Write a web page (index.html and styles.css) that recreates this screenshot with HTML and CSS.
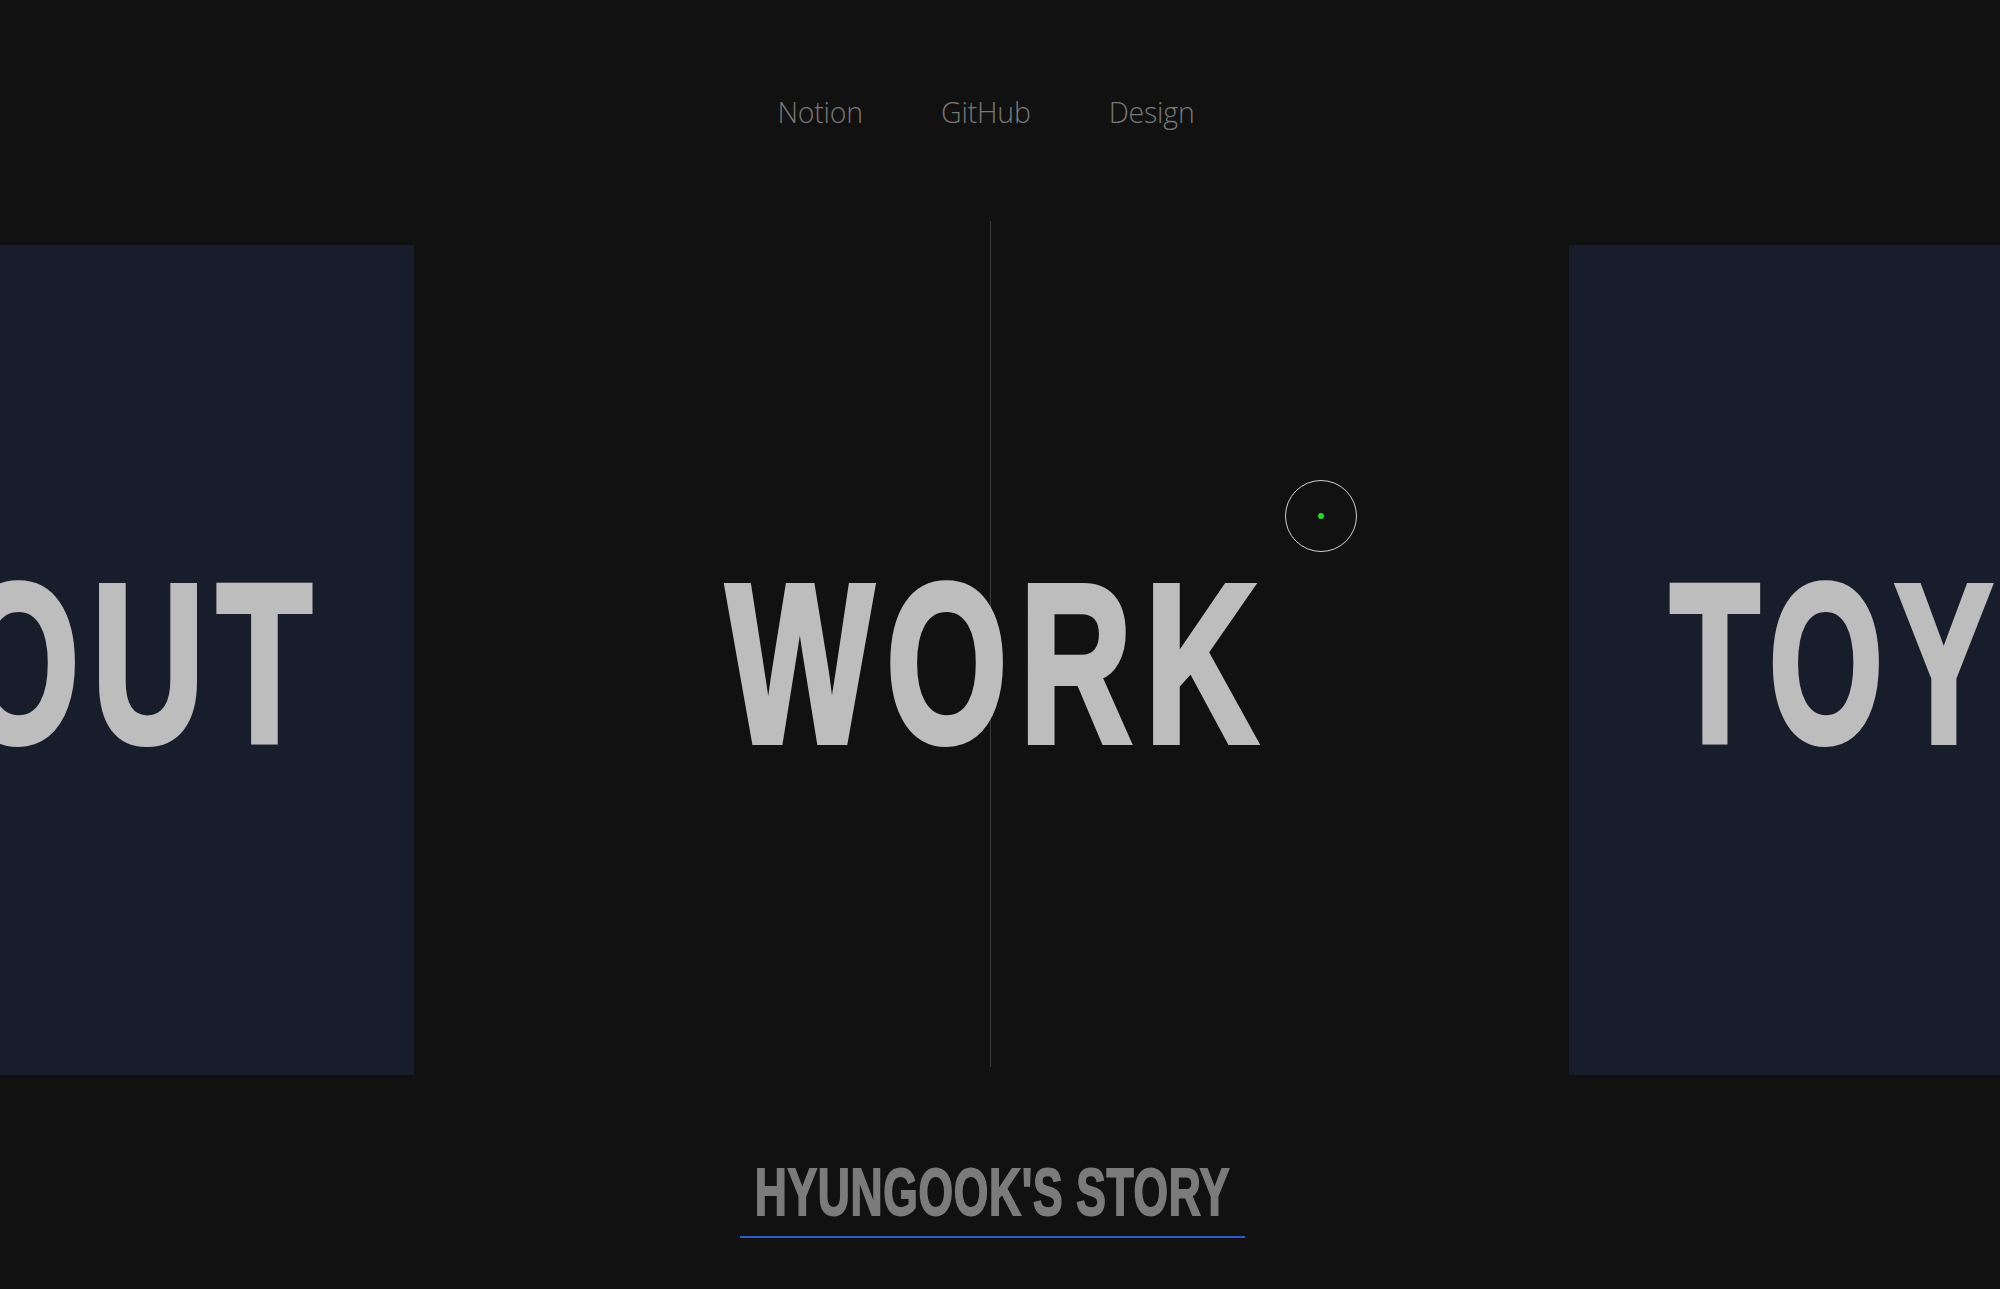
FILE: index.html
```html
<!DOCTYPE html>
<html lang="en">
<head>
<meta charset="utf-8">
<title>Hyungook's Story</title>
<link rel="stylesheet" href="styles.css">
</head>
<body>
  <nav class="nav">
    <a class="nav-link" href="#">Notion</a>
    <a class="nav-link" href="#">GitHub</a>
    <a class="nav-link" href="#">Design</a>
  </nav>

  <main class="slider">
    <section class="slide slide-side slide-prev">
      <span class="slide-title title-prev">ABOUT</span>
    </section>
    <section class="slide slide-active">
      <span class="center-line"></span>
      <span class="slide-title title-active">WORK</span>
    </section>
    <section class="slide slide-side slide-next">
      <span class="slide-title title-next">TOY</span>
    </section>
  </main>

  <footer class="story">
    <h2 class="story-heading"><span class="story-text">HYUNGOOK'S STORY</span></h2>
  </footer>

  <div class="cursor"><span class="cursor-dot"></span></div>
</body>
</html>
```

FILE: styles.css
```css
html, body {
  margin: 0;
  padding: 0;
}

body {
  background: #111111;
  width: 2000px;
  height: 1289px;
  overflow: hidden;
  position: relative;
  font-family: "Open Sans", "Liberation Sans", sans-serif;
}

.nav {
  display: flex;
  justify-content: center;
  gap: 78px;
  padding-top: 93px;
  padding-right: 28px;
}

.nav-link {
  color: #777777;
  font-weight: 300;
  font-size: 28.5px;
  text-decoration: none;
  letter-spacing: -0.2px;
}

.slider {
  display: flex;
  height: 830px;
  margin-top: 114px;
}

.slide {
  display: flex;
  align-items: center;
  overflow: hidden;
  padding-top: 8px;
  box-sizing: border-box;
}

.slide-side {
  background: #181d2b;
}

.slide-prev {
  width: 414px;
  justify-content: flex-end;
  padding-right: 108px;
}

.slide-next {
  width: 431px;
  justify-content: flex-start;
  padding-left: 101px;
}

.slide-active {
  flex: 1;
  justify-content: center;
  position: relative;
  overflow: visible;
}

.center-line {
  position: absolute;
  left: 576px;
  top: -24px;
  width: 1px;
  height: 846px;
  background: #3a3a3a;
}

.slide-title {
  display: inline-block;
  flex: none;
  white-space: nowrap;
  font-family: "Liberation Sans", "Arial", sans-serif;
  font-weight: 700;
  font-size: 226px;
  line-height: 1;
  color: #bdbdbd;
  -webkit-text-stroke: 6px #bdbdbd;
  letter-spacing: 18px;
  position: relative;
}

.title-active {
  transform: scaleX(0.69);
  transform-origin: center;
  padding-left: 18px;
}

.title-prev {
  transform: scaleX(0.69);
  transform-origin: right center;
  margin-right: -18px;
}

.title-next {
  transform: scaleX(0.65);
  transform-origin: left center;
}

.story {
  display: flex;
  justify-content: center;
  margin-top: 83px;
  padding-right: 16px;
}

.story-heading {
  margin: 0;
  width: 505px;
  display: flex;
  justify-content: center;
  padding-bottom: 11px;
  border-bottom: 2px solid #2d5bc7;
  font-family: "Liberation Sans", "Arial", sans-serif;
  font-weight: 700;
  font-size: 67px;
  line-height: 1;
  color: #7b7b7b;
}

.story-text {
  display: inline-block;
  flex: none;
  white-space: nowrap;
  transform: scaleX(0.663);
  transform-origin: center;
  -webkit-text-stroke: 2px #7b7b7b;
  letter-spacing: 1px;
}

.cursor {
  position: absolute;
  left: 1285px;
  top: 480px;
  width: 72px;
  height: 72px;
  box-sizing: border-box;
  border: 1.5px solid #d0d0d0;
  border-radius: 50%;
  display: flex;
  align-items: center;
  justify-content: center;
}

.cursor-dot {
  width: 6px;
  height: 6px;
  border-radius: 50%;
  background: #2bd42b;
}
```
